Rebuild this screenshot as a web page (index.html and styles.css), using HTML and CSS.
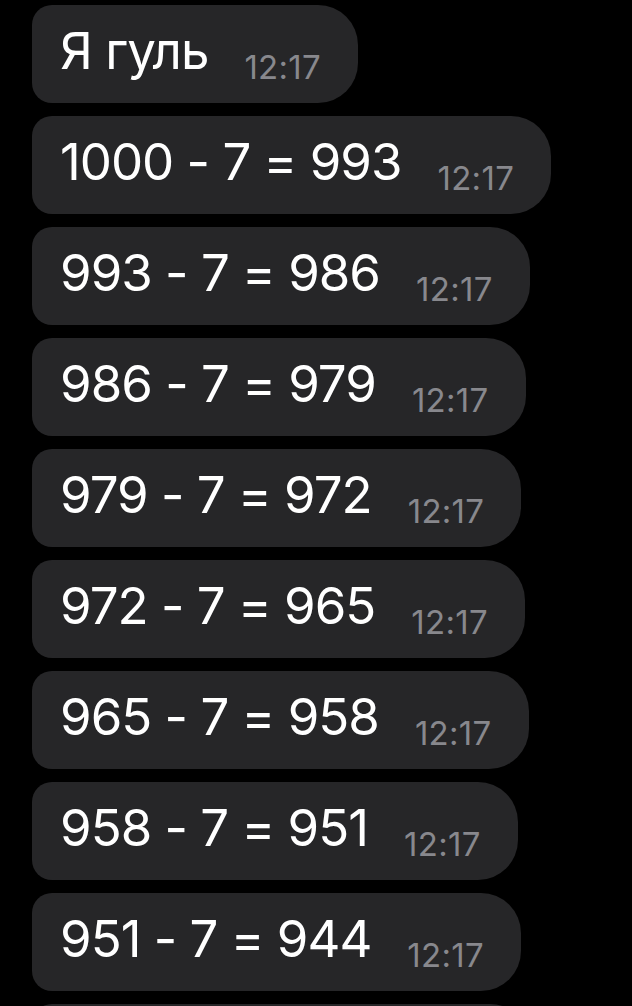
FILE: index.html
```
<!DOCTYPE html>
<html lang="ru">
<head>
<meta charset="utf-8">
<title>Chat</title>
<link rel="stylesheet" href="styles.css">
</head>
<body>
<div class="chat">
  <div class="bubble"><span class="text">Я гуль</span><span class="time">12:17</span></div>
  <div class="bubble"><span class="text">1000 - 7 = 993</span><span class="time">12:17</span></div>
  <div class="bubble"><span class="text">993 - 7 = 986</span><span class="time">12:17</span></div>
  <div class="bubble"><span class="text">986 - 7 = 979</span><span class="time">12:17</span></div>
  <div class="bubble"><span class="text">979 - 7 = 972</span><span class="time">12:17</span></div>
  <div class="bubble"><span class="text">972 - 7 = 965</span><span class="time">12:17</span></div>
  <div class="bubble"><span class="text">965 - 7 = 958</span><span class="time">12:17</span></div>
  <div class="bubble"><span class="text">958 - 7 = 951</span><span class="time">12:17</span></div>
  <div class="bubble"><span class="text">951 - 7 = 944</span><span class="time">12:17</span></div>
  <div class="bubble"><span class="text">944 - 7 = 937</span><span class="time">12:17</span></div>
</div>
</body>
</html>
```
FILE: styles.css
```
html, body {
  margin: 0;
  padding: 0;
  background: #000;
  height: 1006px;
  overflow: hidden;
}

.chat {
  display: flex;
  flex-direction: column;
  align-items: flex-start;
  gap: 13px;
  padding: 5px 0 0 32px;
  font-family: Inter, "Liberation Sans", Arial, sans-serif;
}

.bubble {
  box-sizing: border-box;
  height: 98px;
  padding: 0 37px 0 28px;
  background: #262628;
  border-radius: 20px 40px 40px 20px;
  font-size: 51px;
  line-height: 92px;
  color: #fff;
  white-space: nowrap;
}

.text {
  letter-spacing: -1px;
}

.time {
  margin-left: 36px;
  font-size: 33px;
  font-weight: 400;
  letter-spacing: 0.3px;
  color: #88888d;
  vertical-align: -9.5px;
}
```
